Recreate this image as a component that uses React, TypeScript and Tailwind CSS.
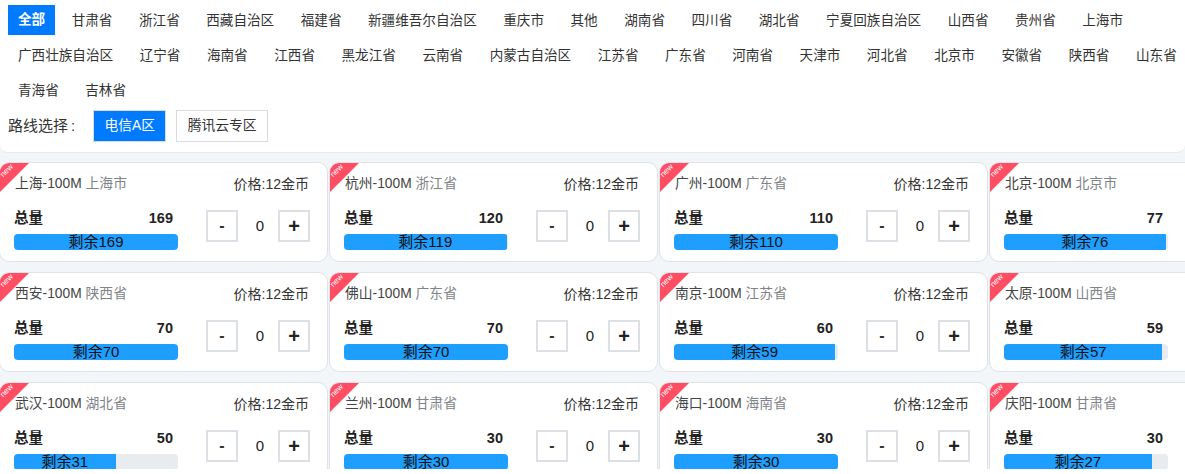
const rows = [
  ['全部', '甘肃省', '浙江省', '西藏自治区', '福建省', '新疆维吾尔自治区', '重庆市', '其他', '湖南省', '四川省', '湖北省', '宁夏回族自治区', '山西省', '贵州省', '上海市'],
  ['广西壮族自治区', '辽宁省', '海南省', '江西省', '黑龙江省', '云南省', '内蒙古自治区', '江苏省', '广东省', '河南省', '天津市', '河北省', '北京市', '安徽省', '陕西省', '山东省'],
  ['青海省', '吉林省'],
];

const lines = [
  { city: '上海', region: '上海市', total: 169, left: 169 },
  { city: '杭州', region: '浙江省', total: 120, left: 119 },
  { city: '广州', region: '广东省', total: 110, left: 110 },
  { city: '北京', region: '北京市', total: 77, left: 76 },
  { city: '西安', region: '陕西省', total: 70, left: 70 },
  { city: '佛山', region: '广东省', total: 70, left: 70 },
  { city: '南京', region: '江苏省', total: 60, left: 59 },
  { city: '太原', region: '山西省', total: 59, left: 57 },
  { city: '武汉', region: '湖北省', total: 50, left: 31 },
  { city: '兰州', region: '甘肃省', total: 30, left: 30 },
  { city: '海口', region: '海南省', total: 30, left: 30 },
  { city: '庆阳', region: '甘肃省', total: 30, left: 27 },
];

type Line = (typeof lines)[number];

const LineCard = ({ city, region, total, left }: Line) => (
  <div className="relative h-[100px] w-[329px] shrink-0 overflow-hidden rounded-[10px] border border-[#dfe2e6] bg-white">
    <div className="absolute left-0 top-0 h-0 w-0 border-r-[29px] border-t-[29px] border-r-transparent border-t-[#ff4d63]" />
    <span className="absolute left-[-5px] top-[4px] w-[24px] -rotate-45 text-center text-[8px] leading-none text-white">new</span>

    <div className="flex h-[40px] items-center justify-between pl-[15px] pr-[18px] pt-[3px] text-[13.8px]">
      <span className="text-[#444]">
        {city}-100M <span className="text-[#808489]">{region}</span>
      </span>
      <span className="text-[14px] text-[#333]">价格:12金币</span>
    </div>

    <div className="flex items-start pl-[14px] pt-[5px]">
      <div className="w-[164px] shrink-0">
        <div className="flex h-[22px] items-center justify-between pr-[5px] text-[14.5px] font-bold text-[#222]">
          <span>总量</span>
          <span>{total}</span>
        </div>
        <div className="mt-[4px] h-[16px] overflow-hidden rounded-[4px] bg-[#e9ecef]">
          <div
            className="flex h-full items-center justify-center whitespace-nowrap bg-[#1e9fff] text-[15px] text-[#111]"
            style={{ width: `${(left / total) * 100}%` }}
          >
            剩余{left}
          </div>
        </div>
      </div>
      <div className="ml-[28px] flex shrink-0 items-center pt-[2px]">
        <button type="button" className="flex h-[32px] w-[32px] items-center justify-center border-2 border-[#dcdfe3] bg-white text-[16px] font-bold text-[#333]">-</button>
        <span className="w-[40px] pl-[4px] text-center text-[15px] text-[#222]">0</span>
        <button type="button" className="flex h-[32px] w-[32px] items-center justify-center border-2 border-[#dcdfe3] bg-white text-[20px] font-bold text-[#222]">+</button>
      </div>
    </div>
  </div>
);

export default function App() {
  return (
    <div className="h-[474px] overflow-hidden bg-white font-['Liberation_Sans','Noto_Sans_CJK_SC',sans-serif]">
      <div className="h-[469px] overflow-hidden bg-[#f3f6f9]">
        <div className="h-[153px] rounded-b-[8px] border-b border-[#e6e9ed] bg-white pl-2 pt-[5px]">
          {rows.map((row, i) => (
            <div key={i} className="flex h-[35px] gap-[6.5px] whitespace-nowrap">
              {row.map((name) => (
                <a
                  key={name}
                  className={
                    name === '全部'
                      ? 'flex h-[30px] items-center bg-[#007bff] px-[10px] pt-[1px] text-[13.6px] font-bold text-white'
                      : 'flex h-[30px] items-center px-[10px] pt-[2px] text-[13.6px] text-[#333]'
                  }
                >
                  {name}
                </a>
              ))}
            </div>
          ))}
          <div className="flex items-center text-[#333]">
            <span className="mr-[18px] text-[15px]">
              路线选择<span className="ml-[3px]">:</span>
            </span>
            <button type="button" className="h-[32px] w-[73px] border border-[#d8dce0] bg-[#007bff] text-[13.8px] text-white">电信A区</button>
            <button type="button" className="ml-[10px] h-[32px] w-[92px] border border-[#d8dce0] bg-white text-[13.8px] text-[#333]">腾讯云专区</button>
          </div>
        </div>
        <div className="-ml-[1px] mt-[9px] grid w-[1400px] grid-cols-[repeat(4,329px)] gap-x-px gap-y-[10px]">
          {lines.map((line) => (
            <LineCard key={line.city} {...line} />
          ))}
        </div>
      </div>
    </div>
  );
}
